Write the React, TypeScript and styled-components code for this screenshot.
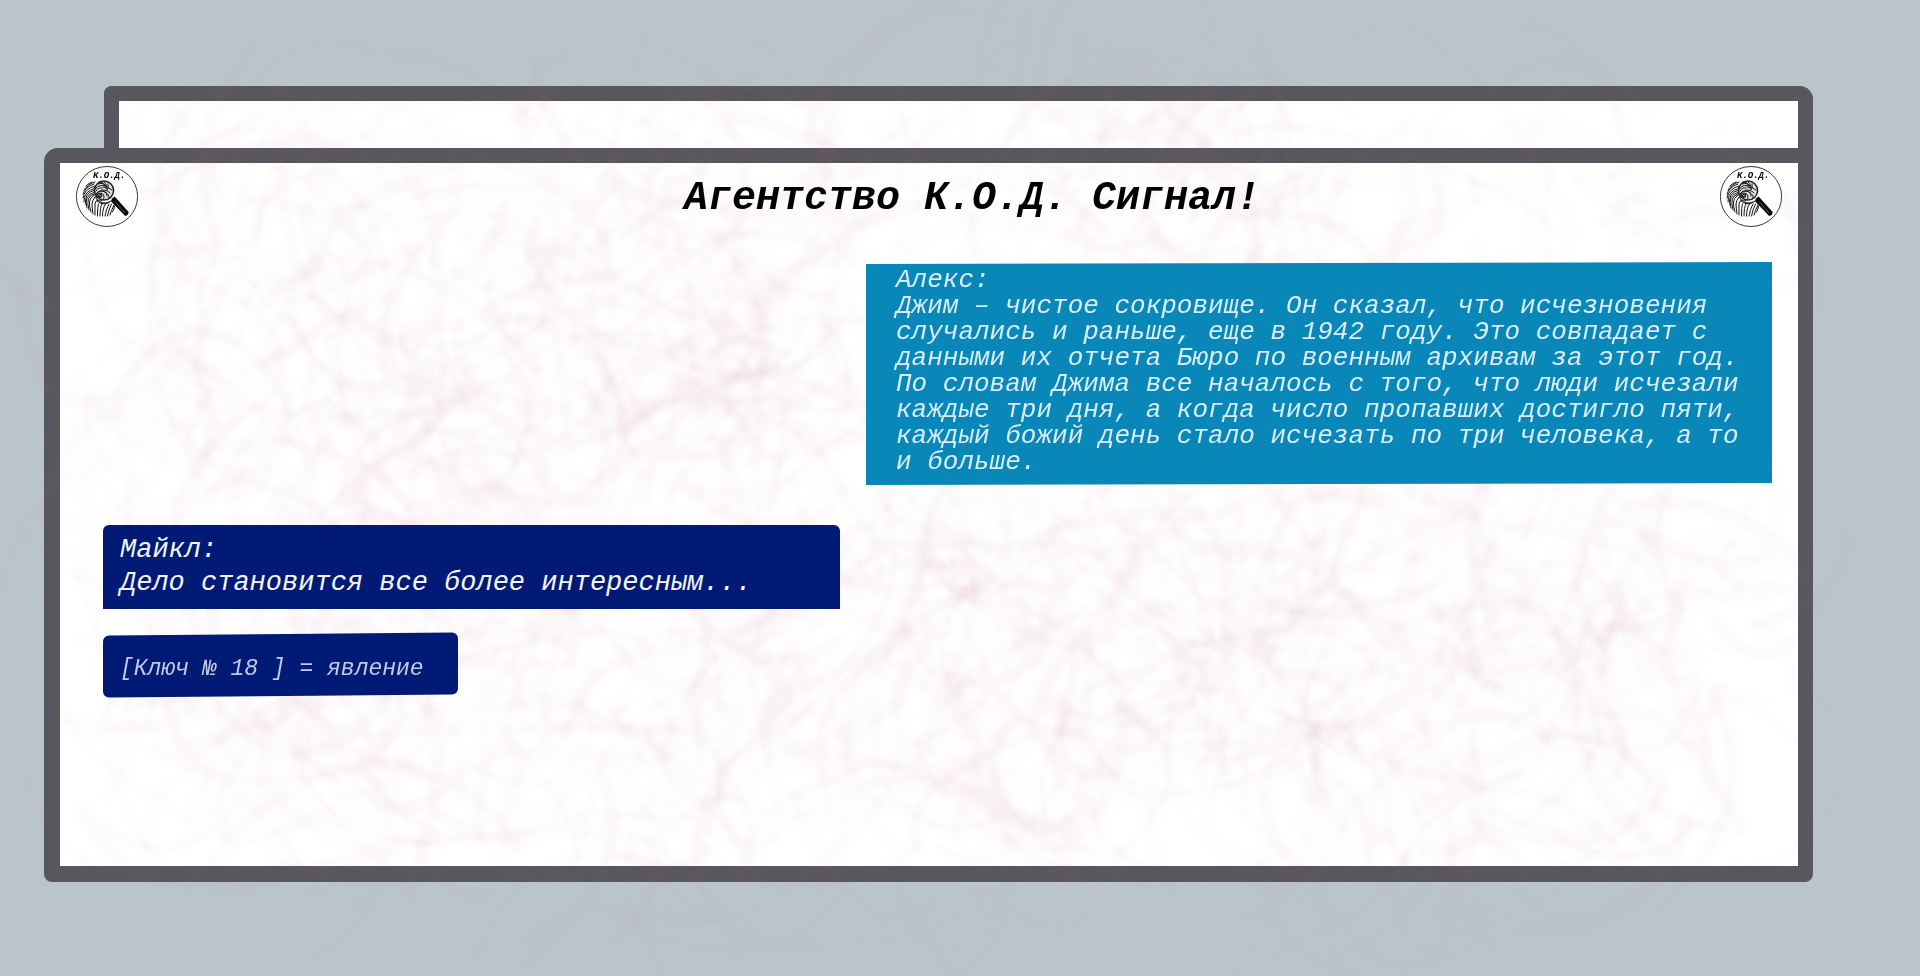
import React from 'react';
import styled, { createGlobalStyle, css } from 'styled-components';

const GlobalStyle = createGlobalStyle`
  *, *::before { box-sizing: border-box; }
  body { margin: 0; background: #bac5cb; }
`;

const frameColor = '#58575d';

const Page = styled.main`
  position: relative;
  min-height: 100vh;
  padding: 86px 107px 94px 44px;
  overflow: hidden;
  background: #bac5cb;
  color: #000;
  font-family: 'Liberation Mono', 'Courier New', monospace;
  font-style: italic;
`;

const BackSheet = styled.div`
  height: 62px;
  margin-left: 60px;
  border: 15px solid ${frameColor};
  border-bottom: 0;
  border-radius: 8px 14px 0 0;
  background: #fff;
`;

const FrontSheet = styled.section`
  min-height: calc(100vh - 242px);
  border: 15px solid ${frameColor};
  border-width: 15px 15px 16px 16px;
  border-radius: 14px 0 8px 8px;
  background: #fff;
`;

const Texture = styled.svg`
  position: absolute;
  inset: 0;
  z-index: 1;
  width: 100%;
  height: 100%;
  pointer-events: none;
`;

const Header = styled.header`
  position: relative;
  z-index: 2;
  display: flex;
  align-items: flex-start;
  padding: 3px 16px 0;
`;

const Title = styled.h1`
  flex: 1;
  margin: 0;
  padding: 11px 0 0 86px;
  font-size: 40px;
  line-height: 44px;
  font-weight: 700;
  text-align: center;
`;

const LogoMark = styled.svg`
  flex: none;
  width: 62px;
  height: 62px;
`;

const Chat = styled.div`
  position: relative;
  z-index: 2;
  display: flex;
  flex-direction: column;
  align-items: flex-start;
  padding: 35px 26px 24px 43px;
`;

type Kind = 'incoming' | 'outgoing' | 'key';

const kinds = {
  incoming: css`
    align-self: flex-end;
    width: 906px;
    margin-bottom: 41px;
    padding: 4px 12px 9px 30px;
    font-size: 26px;
    line-height: 26px;
    color: #d8edf6;
    &::before {
      background: #0887b8;
      transform: skewY(-0.13deg);
    }
  `,
  outgoing: css`
    width: 737px;
    margin-bottom: 25px;
    padding: 9px 17px;
    font-size: 27px;
    line-height: 33px;
    color: #f4f5fb;
    &::before {
      background: #011a76;
      border-radius: 6px 6px 0 0;
    }
  `,
  key: css`
    width: 355px;
    padding: 19px 17px 10px;
    font-size: 23px;
    line-height: 33px;
    color: #c3c9e2;
    &::before {
      background: #011a76;
      border-radius: 6px;
      transform: skewY(-0.5deg);
    }
  `,
};

const Message = styled.p<{ $kind: Kind }>`
  position: relative;
  z-index: 0;
  max-width: 100%;
  margin: 0;
  &::before {
    content: '';
    position: absolute;
    inset: 0;
    z-index: -1;
  }
  ${({ $kind }) => kinds[$kind]}
`;

/* Seeded generator, so the paper fibres are the same on every render. */
function makeRandom(seed: number) {
  let s = seed;
  return () => {
    s = (s * 1664525 + 1013904223) % 4294967296;
    return s / 4294967296;
  };
}

/* Centre x, centre y, reach and number of fibres. */
const clusters: [number, number, number, number][] = [
  [380, 280, 240, 60], [400, 440, 220, 60], [220, 470, 180, 50], [640, 350, 230, 60],
  [740, 460, 220, 60], [560, 230, 240, 40], [1050, 540, 200, 60], [1040, 660, 240, 60],
  [1380, 560, 220, 60], [1480, 650, 210, 40], [1260, 220, 200, 60], [1060, 180, 230, 60],
  [420, 690, 220, 60], [780, 650, 240, 60], [1200, 720, 230, 60], [1580, 240, 200, 40],
  [180, 660, 190, 50], [1640, 690, 180, 40], [620, 770, 210, 50], [1460, 800, 200, 50],
  [820, 230, 240, 60], [200, 240, 190, 40], [950, 770, 220, 50], [1240, 590, 220, 50],
  [1640, 560, 170, 40], [580, 560, 230, 60], [300, 800, 200, 40], [1380, 860, 200, 20],
  [700, 860, 220, 20],
];

const fibres = (() => {
  const r = makeRandom(42);
  const list: { d: string; w: number; o: number }[] = [];
  clusters.forEach(([cx, cy, size, count]) => {
    for (let i = 0; i < count; i++) {
      const a = r() * Math.PI * 2;
      const dist = Math.sqrt(r()) * size * 0.9;
      const x = cx + Math.cos(a) * dist;
      const y = cy + Math.sin(a) * dist * 0.7;
      const rad = 30 + r() * size * 0.5;
      const start = r() * Math.PI * 2;
      const pts = [0, 1, 2, 3].map((k) => {
        const t = start + k * (0.4 + r() * 0.4);
        return [Math.round(x + Math.cos(t) * rad), Math.round(y + Math.sin(t) * rad * (0.7 + r() * 0.5))];
      });
      list.push({
        d: `M${pts[0]}C${pts[1]} ${pts[2]} ${pts[3]}`,
        w: 3 + Math.round(r() * 11),
        o: 0.012 + r() * 0.024,
      });
    }
  });
  return list;
})();

function PaperTexture() {
  return (
    <Texture viewBox="0 0 1920 976" preserveAspectRatio="none" aria-hidden="true">
      <defs>
        <filter id="fibre-soft" x="0" y="0" width="1920" height="976" filterUnits="userSpaceOnUse" colorInterpolationFilters="sRGB">
          <feGaussianBlur stdDeviation="2" />
        </filter>
      </defs>
      <g filter="url(#fibre-soft)" fill="none" stroke="#c87882" strokeLinecap="round">
        {fibres.map((f, i) => (
          <path key={i} d={f.d} strokeWidth={f.w} opacity={f.o} />
        ))}
      </g>
    </Texture>
  );
}

function Logo() {
  return (
    <LogoMark viewBox="0 0 62 62" role="img" aria-label="К.О.Д.">
      <ellipse cx="31" cy="30.5" rx="30.6" ry="30" fill="#fff" stroke="#222" strokeWidth="0.9" />
      <text x="17" y="12" fontSize="9" fontWeight="700" fontStyle="italic" fontFamily="Liberation Mono, monospace">
        К.О.Д.
      </text>
      <g fill="none" stroke="#111" strokeWidth="1" strokeLinecap="round">
        <path d="M10 20q3-3 6-4M8 24q4-6 11-8M7 28q2-7 11-10M7 32q1-9 12-12M8 36q-1-11 12-14" />
        <path d="M10 39q-3-12 9-15M11 42q-4-13 8-16M13 44q-4-14 5-16M15 46q-4-12 2-16q4-4 9-1" />
        <path d="M17 48q-1-7-1-10t3-7q3-2 6 0M19 49q0-8 0-11t3-4M21.500 50q0-9 1-12M24 50q0-9 2-12" />
        <path d="M26.500 50q0-8 3-12M29 50q1-7 4-12M31.500 50q1-6 4-12M34 49q1-4 4-10M36.500 46q2-3 2-6" />
        <path d="M24 36q6 2 9 0M21 35q7 6 14 0" />
        <circle cx="24" cy="30" r="1.5" />
        <path d="M21 31q0-4 3-4t4 3-3 5q-5 0-5-4 0-6 5-6 6 0 6 5" />
        <path d="M20 25q2-4 6-3M20 22q4-4 9-2M22 18q5-2 8 2M23 16q5 0 6 4M28 16q4 3 2 7M32 18q1 4-1 6M20 28q4-5 9-2t4 6M26 24q6 0 8 3M27 21q5-1 9 3" />
      </g>
      <circle cx="28" cy="24.5" r="9.6" fill="#222" fillOpacity="0.14" stroke="#222" strokeWidth="1.5" />
      <path d="M36.2 32.2l2.4-1.600 14 15.4q0 3.4-3.4 4L35 35.2z" fill="#080808" />
      <path d="M39 35.5l10.5 12" stroke="#ddd" strokeWidth="0.6" strokeDasharray="1 0.6" />
    </LogoMark>
  );
}

export default function App() {
  return (
    <>
      <GlobalStyle />
      <Page lang="ru">
        <BackSheet />
        <FrontSheet>
          <Header>
            <Logo />
            <Title>Агентство К.О.Д. Сигнал!</Title>
            <Logo />
          </Header>
          <Chat>
            <Message $kind="incoming">
              Алекс:
              <br />
              Джим – чистое сокровище. Он сказал, что исчезновения случались и раньше, еще в 1942
              году. Это совпадает с данными их отчета Бюро по военным архивам за этот год. По
              словам Джима все началось с того, что люди исчезали каждые три дня, а когда число
              пропавших достигло пяти, каждый божий день стало исчезать по три человека, а то и
              больше.
            </Message>
            <Message $kind="outgoing">
              Майкл:
              <br />
              Дело становится все более интересным...
            </Message>
            <Message $kind="key">[Ключ № 18 ] = явление</Message>
          </Chat>
        </FrontSheet>
        <PaperTexture />
      </Page>
    </>
  );
}
